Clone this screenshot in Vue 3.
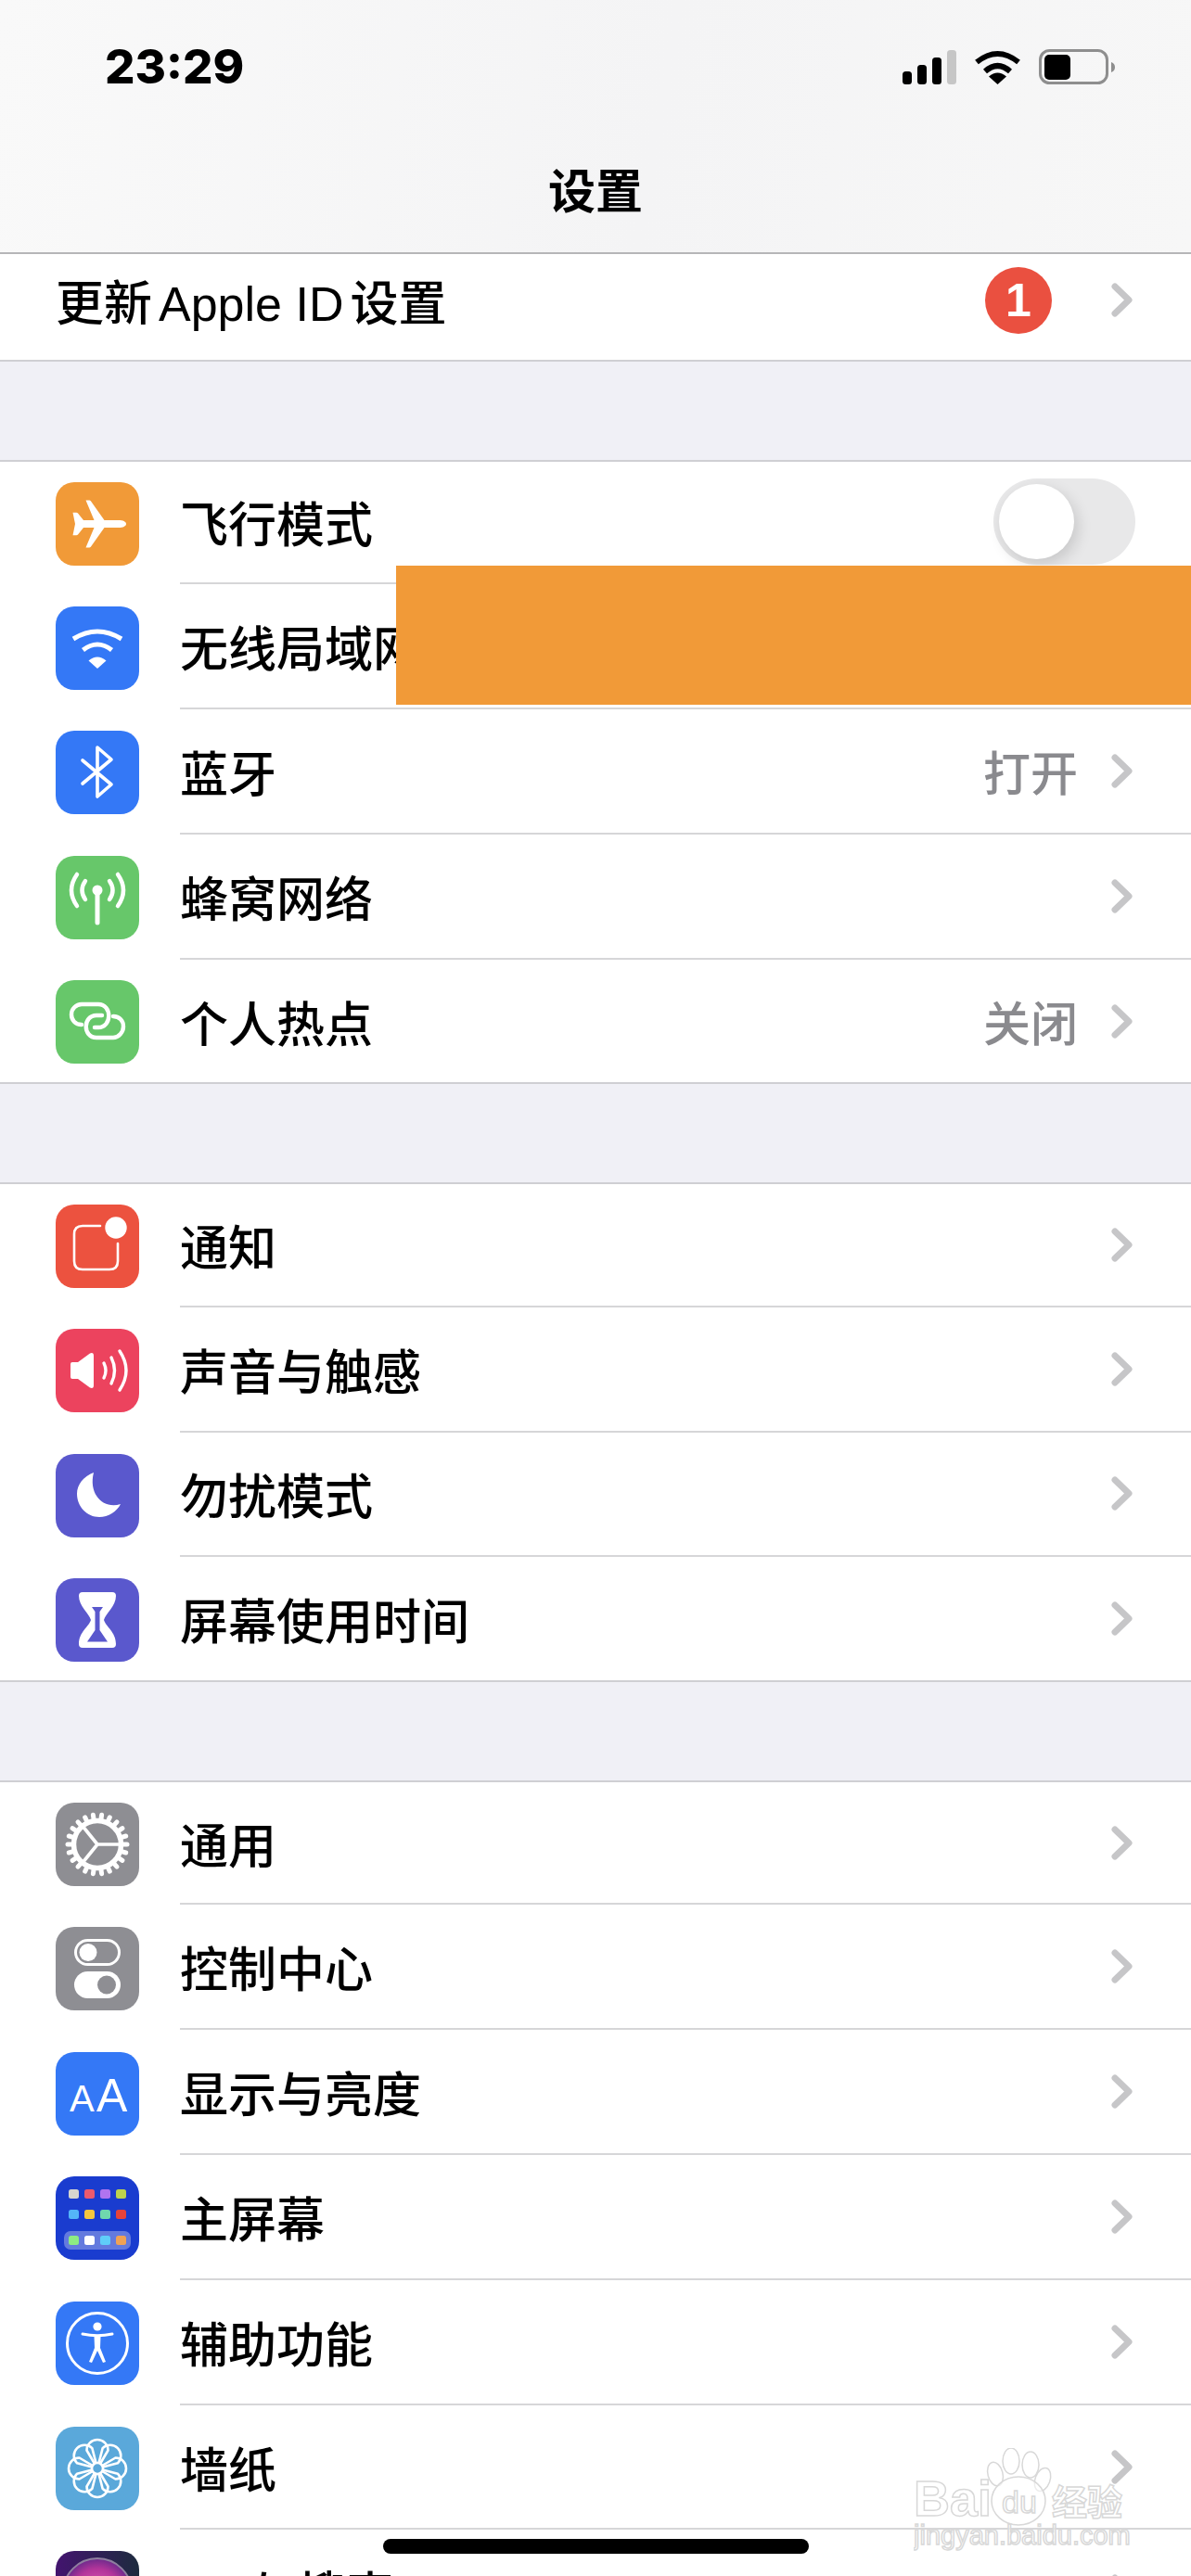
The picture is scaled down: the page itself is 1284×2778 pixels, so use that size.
<template>
  <div class="phone">
    <header class="nav">
      <div class="status">
        <span class="time">23:29</span>
        <div class="status-icons">
          <svg width="58" height="37" viewBox="0 0 58 37">
            <rect x="0" y="23" width="10" height="14" rx="3.5" fill="#000" />
            <rect x="16" y="16" width="10" height="21" rx="3.5" fill="#000" />
            <rect x="32" y="8" width="10" height="29" rx="3.5" fill="#000" />
            <rect x="48" y="0" width="10" height="37" rx="3.5" fill="#c6c6c6" />
          </svg>
          <svg width="51" height="37" viewBox="0 0 51 37">
            <path d="M3 13 Q25.5 -5 48 13" fill="none" stroke="#000" stroke-width="6" />
            <path d="M12 23 Q25.5 11 39 23" fill="none" stroke="#000" stroke-width="6" />
            <path d="M25.5 37 L16 28.5 Q25.5 20.5 35 28.5 Z" fill="#000" />
          </svg>
          <svg width="82" height="38" viewBox="0 0 82 38">
            <rect x="1.5" y="1.5" width="72" height="35" rx="10" fill="none" stroke="#8e8e8e" stroke-width="3" />
            <rect x="6" y="6" width="28" height="27" rx="5" fill="#000" />
            <path d="M78 14 C81 15 82 17 82 19.5 C82 22 81 24 78 25 Z" fill="#8e8e8e" />
          </svg>
        </div>
      </div>
      <div class="title">设置</div>
    </header>

    <div class="apple-row">
      <span class="apple-text">更新<span class="latin">Apple ID</span>设置</span>
      <span class="badge">1</span>
      <svg class="chevron" width="23" height="37" viewBox="0 0 23 37">
        <path d="M4 4 L19 18.5 L4 33" fill="none" stroke="#c6c6c8" stroke-width="7" stroke-linecap="round" stroke-linejoin="round" />
      </svg>
    </div>

    <section v-for="(group, i) in groups" :key="i" class="group">
      <div v-for="row in group" :key="row.label" class="row">
        <svg class="icon" width="90" height="90" viewBox="0 0 90 90" v-html="icons[row.icon]"></svg>
        <div class="row-body">
          <span class="label">{{ row.label }}</span>
          <span v-if="row.value" class="value">{{ row.value }}</span>
          <div v-if="row.toggle" class="toggle"><i class="knob"></i></div>
          <svg v-else class="chevron" width="23" height="37" viewBox="0 0 23 37">
            <path d="M4 4 L19 18.5 L4 33" fill="none" stroke="#c6c6c8" stroke-width="7" stroke-linecap="round" stroke-linejoin="round" />
          </svg>
        </div>
      </div>
    </section>

    <!-- 打码遮挡 -->
    <div class="redact"></div>

    <!-- 水印 -->
    <svg class="watermark" width="240" height="115" viewBox="0 0 240 115">
      <g fill="#fff" fill-opacity="0.55" stroke="#d8d8d8" stroke-width="1.5">
        <ellipse cx="88" cy="28" rx="8" ry="13" transform="rotate(-15 88 28)" />
        <ellipse cx="105" cy="14" rx="9" ry="14" />
        <ellipse cx="126" cy="18" rx="9" ry="14" />
        <ellipse cx="139" cy="34" rx="8" ry="13" transform="rotate(20 139 34)" />
        <ellipse cx="113" cy="57" rx="29" ry="26" />
        <text x="0" y="73" class="wm-bai">Bai</text>
        <text x="95" y="70" class="wm-du">du</text>
        <text x="149" y="72" class="wm-cn">经验</text>
        <text x="0" y="104" class="wm-url">jingyan.baidu.com</text>
      </g>
    </svg>

    <div class="home-bar"></div>
  </div>
</template>

<script setup>
const white = 'fill="none" stroke="#fff" stroke-linecap="round" stroke-linejoin="round"'

// 齿轮的齿
let teeth = ''
for (let i = 0; i < 22; i++) {
  const a = (i * Math.PI) / 11
  const x1 = 45 + 28 * Math.cos(a)
  const y1 = 45 + 28 * Math.sin(a)
  const x2 = 45 + 32 * Math.cos(a)
  const y2 = 45 + 32 * Math.sin(a)
  teeth += `<line x1="${x1.toFixed(1)}" y1="${y1.toFixed(1)}" x2="${x2.toFixed(1)}" y2="${y2.toFixed(1)}" stroke="#fff" stroke-width="5" stroke-linecap="round"/>`
}

// 墙纸的花瓣
let petals = ''
for (let i = 0; i < 8; i++) {
  petals += `<path d="M45 45 L33.5 25.5 a11.5 11.5 0 0 1 23 0 Z" ${white} stroke-width="2.6" transform="rotate(${i * 45} 45 45)"/>`
}

const dot = (x, y, c) => `<rect x="${x}" y="${y}" width="11" height="10" rx="2.5" fill="${c}"/>`

const icons = {
  plane: `<rect width="90" height="90" rx="20" fill="#f19a38"/><path d="M76 45c0 2.5-3.5 4-8 4H52.5L38 69.5c-.5.8-1.3 1-2 1h-3.5L41.5 49H30l-6 7.5c-.4.5-1 .7-1.7.7H18.5L21 45 18.5 32.8h3.8c.7 0 1.3.2 1.7.7L30 41h11.5L32.5 19.5H36c.7 0 1.5.2 2 1L52.5 41H68c4.5 0 8 1.5 8 4z" fill="#fff"/>`,
  wifi: `<rect width="90" height="90" rx="20" fill="#3478f6"/><path d="M19 35 Q45 19 71 35" fill="none" stroke="#fff" stroke-width="5"/><path d="M29.5 47 Q45 35 60.5 47" fill="none" stroke="#fff" stroke-width="5"/><path d="M45 67 L35.5 58.5 Q45 50.5 54.5 58.5 Z" fill="#fff"/>`,
  bluetooth: `<rect width="90" height="90" rx="20" fill="#3478f6"/><path d="M29 32 L60 58 L45 71 V18 L60 31 L29 57" ${white} stroke-width="3.6"/>`,
  cellular: `<rect width="90" height="90" rx="20" fill="#67c76a"/><circle cx="45" cy="37" r="5.5" fill="#fff"/><path d="M45 38 V72" ${white} stroke-width="5"/><path d="M23 20 Q11 37 23 54 M67 20 Q79 37 67 54 M32 27 Q25 37 32 47 M58 27 Q65 37 58 47" ${white} stroke-width="4.5"/>`,
  hotspot: `<rect width="90" height="90" rx="20" fill="#67c76a"/><path d="M28 48 C21 48 17 43 17 37 C17 31 22 26 28 26 H46 C61 26 61 51 46 51 H42" ${white} stroke-width="4.4"/><path d="M62 39 C69 39 73 44 73 50 C73 56 68 62 62 62 H44 C29 62 29 38 44 38 H50" ${white} stroke-width="4.4"/>`,
  notify: `<rect width="90" height="90" rx="20" fill="#ec523f"/><path d="M48 23 H29 Q20 23 20 32 V61 Q20 70 29 70 H58 Q67 70 67 61 V42" ${white} stroke-width="2.6"/><circle cx="65" cy="25" r="11.7" fill="#fff"/>`,
  sound: `<rect width="90" height="90" rx="20" fill="#ec435e"/><path d="M16 38 Q16 36 18 36 H24 L37 26.5 Q41 25 41 29 V61 Q41 65 37 63.5 L24 54 H18 Q16 54 16 52Z" fill="#fff"/><path d="M52 37 Q56 45 52 53 M60 31 Q67 45 60 59 M69 24 Q83 45 69 66" ${white} stroke-width="3.4"/>`,
  moon: `<rect width="90" height="90" rx="20" fill="#5a58cd"/><path d="M41 20 C30 24 23 33 23 43 C23 57 34 68 47 68 C57 68 66 62 70 54 C52 60 35 44 41 20Z" fill="#fff"/>`,
  hourglass: `<rect width="90" height="90" rx="20" fill="#5a58cd"/><path d="M29 15 H61 Q65 15 65 19 C65 30 54 38 52 45 C54 52 65 58 65 71 Q65 75 61 75 H29 Q25 75 25 71 C25 58 36 52 38 45 C36 38 25 30 25 19 Q25 15 29 15Z" fill="#fff"/><path d="M39 31 H51 L47.5 36 V56 L56 68.5 H34 L42.5 56 V36Z" fill="#5a58cd"/>`,
  gear: `<rect width="90" height="90" rx="20" fill="#8e8e93"/><circle cx="45" cy="45" r="25.5" ${white} stroke-width="5.5"/>${teeth}<path d="M45 45 L72 45 M45 45 L28 24 M45 45 L28 66" ${white} stroke-width="3.6"/>`,
  control: `<rect width="90" height="90" rx="20" fill="#8e8e93"/><rect x="21.5" y="14.5" width="47" height="26" rx="13" fill="none" stroke="#fff" stroke-width="3"/><circle cx="35" cy="27.5" r="9.5" fill="#fff"/><rect x="20" y="48" width="50" height="29" rx="14.5" fill="#fff"/><circle cx="55" cy="62.5" r="10" fill="#8e8e93"/>`,
  display: `<rect width="90" height="90" rx="20" fill="#3478f6"/><text x="15" y="64" font-family="Liberation Sans" font-size="40" fill="#fff">A</text><text x="44" y="64" font-family="Liberation Sans" font-size="50" fill="#fff">A</text>`,
  home: `<rect width="90" height="90" rx="20" fill="#1a3ccf"/>` +
    dot(14, 14, '#d6d6cf') + dot(31, 14, '#ea5a6e') + dot(48, 14, '#b074f0') + dot(65, 14, '#bcd24e') +
    dot(14, 36, '#54b5f8') + dot(31, 36, '#f6c63e') + dot(48, 36, '#6fd8ae') + dot(65, 36, '#e5433a') +
    `<rect x="9" y="59" width="72" height="20" rx="7" fill="#fff" fill-opacity="0.32"/>` +
    dot(14, 64, '#8deb82') + dot(31, 64, '#ffffff') + dot(48, 64, '#5fcdf9') + dot(65, 64, '#f0a254'),
  access: `<rect width="90" height="90" rx="20" fill="#3478f6"/><circle cx="45" cy="45" r="32.5" ${white} stroke-width="3"/><circle cx="45" cy="27" r="4.6" fill="#fff"/><path d="M29 35 Q45 38.5 61 35" ${white} stroke-width="3"/><path d="M41.5 37 H48.5 L48 50 L54 65 L51 66 L45 53 L39 66 L36 65 L42 50Z" fill="#fff"/>`,
  wallpaper: `<rect width="90" height="90" rx="20" fill="#5aa8da"/>${petals}<circle cx="45" cy="45" r="6" fill="#5aa8da" stroke="#fff" stroke-width="2.6"/>`,
  siri: `<defs><linearGradient id="siriBg" x1="0" x2="1"><stop offset="0" stop-color="#43146f"/><stop offset="1" stop-color="#1d2b3e"/></linearGradient><radialGradient id="siriBall"><stop offset="0" stop-color="#e85fb8"/><stop offset="0.7" stop-color="#b2359a"/><stop offset="1" stop-color="#6d2a8c"/></radialGradient></defs><rect width="90" height="90" rx="20" fill="url(#siriBg)"/><circle cx="45" cy="45" r="37" fill="url(#siriBall)" stroke="#8f7f9f" stroke-width="2"/>`
}

const groups = [
  [
    { icon: 'plane', label: '飞行模式', toggle: true },
    { icon: 'wifi', label: '无线局域网' },
    { icon: 'bluetooth', label: '蓝牙', value: '打开' },
    { icon: 'cellular', label: '蜂窝网络' },
    { icon: 'hotspot', label: '个人热点', value: '关闭' }
  ],
  [
    { icon: 'notify', label: '通知' },
    { icon: 'sound', label: '声音与触感' },
    { icon: 'moon', label: '勿扰模式' },
    { icon: 'hourglass', label: '屏幕使用时间' }
  ],
  [
    { icon: 'gear', label: '通用' },
    { icon: 'control', label: '控制中心' },
    { icon: 'display', label: '显示与亮度' },
    { icon: 'home', label: '主屏幕' },
    { icon: 'access', label: '辅助功能' },
    { icon: 'wallpaper', label: '墙纸' },
    { icon: 'siri', label: 'Siri与搜索' }
  ]
]
</script>

<style scoped>
.phone {
  position: relative;
  width: 1284px;
  height: 2778px;
  overflow: hidden;
  background: #f0f0f6;
  color: #000;
  font-family: "Liberation Sans", "Noto Sans CJK SC", sans-serif;
}

.nav {
  height: 274px;
  box-sizing: border-box;
  border-bottom: 2px solid #b6b6b8;
  background: linear-gradient(100deg, #f9f9f9, #f4f4f5 55%, #f7f7f7);
}

.status {
  display: flex;
  align-items: center;
  justify-content: space-between;
  padding: 53px 82px 0 113px;
}

.time {
  font-family: Inter, sans-serif;
  font-size: 51px;
  line-height: 38px;
  font-weight: 800;
}

.status-icons {
  display: flex;
  align-items: center;
  gap: 19px;
}

.title {
  margin-top: 87px;
  text-align: center;
  font-size: 51px;
  line-height: 60px;
  font-weight: 700;
}

.apple-row {
  display: flex;
  align-items: center;
  height: 116px;
  box-sizing: border-box;
  padding: 0 63px 15px 60px;
  background: #fff;
  border-bottom: 2px solid #cfcfd3;
}

.apple-text {
  flex: 1;
  font-size: 52px;
  font-weight: 500;
}

.latin {
  margin: 0 7px;
}

.badge {
  width: 72px;
  height: 72px;
  margin-right: 64px;
  border-radius: 50%;
  background: #ea5040;
  color: #fff;
  text-align: center;
  font-size: 50px;
  line-height: 72px;
  font-weight: 700;
}

.group {
  margin-top: 105.5px;
  background: #fff;
}

.row {
  display: flex;
  align-items: center;
  height: 134.8px;
  box-sizing: border-box;
  padding-left: 60px;
}

.row:first-child {
  border-top: 2px solid #cfcfd3;
}

.row:last-child {
  border-bottom: 2px solid #cfcfd3;
}

.icon {
  flex: none;
  margin: 2px 44px 0 0;
}

.row-body {
  flex: 1;
  align-self: stretch;
  display: flex;
  align-items: center;
  padding-right: 63px;
  border-bottom: 2px solid #d6d6d8;
}

.row:last-child .row-body {
  border-bottom: none;
}

.label {
  flex: 1;
  font-size: 52px;
  font-weight: 500;
}

.value {
  margin-right: 36px;
  font-size: 51px;
  font-weight: 500;
  color: #8a8a8e;
}

.toggle {
  position: relative;
  width: 153px;
  height: 93px;
  margin-right: -3px;
  border-radius: 47px;
  background: #e8e8e9;
}

.knob {
  position: absolute;
  left: 6px;
  top: 6px;
  width: 81px;
  height: 81px;
  border-radius: 50%;
  background: #fff;
  box-shadow: 4px 6px 16px rgba(0, 0, 0, 0.14);
}

.redact {
  position: absolute;
  left: 427px;
  top: 610px;
  width: 857px;
  height: 150px;
  background: #f19a38;
}

.watermark {
  position: absolute;
  left: 985px;
  top: 2640px;
}

.wm-bai {
  font: 700 54px "Liberation Sans", sans-serif;
}

.wm-du {
  font: 400 34px "Liberation Sans", sans-serif;
}

.wm-cn {
  font: 700 38px "Noto Sans CJK SC", sans-serif;
}

.wm-url {
  font: 400 29px "Liberation Sans", sans-serif;
}

.home-bar {
  position: absolute;
  left: 413px;
  top: 2738px;
  width: 459px;
  height: 16px;
  border-radius: 8px;
  background: #000;
}
</style>
